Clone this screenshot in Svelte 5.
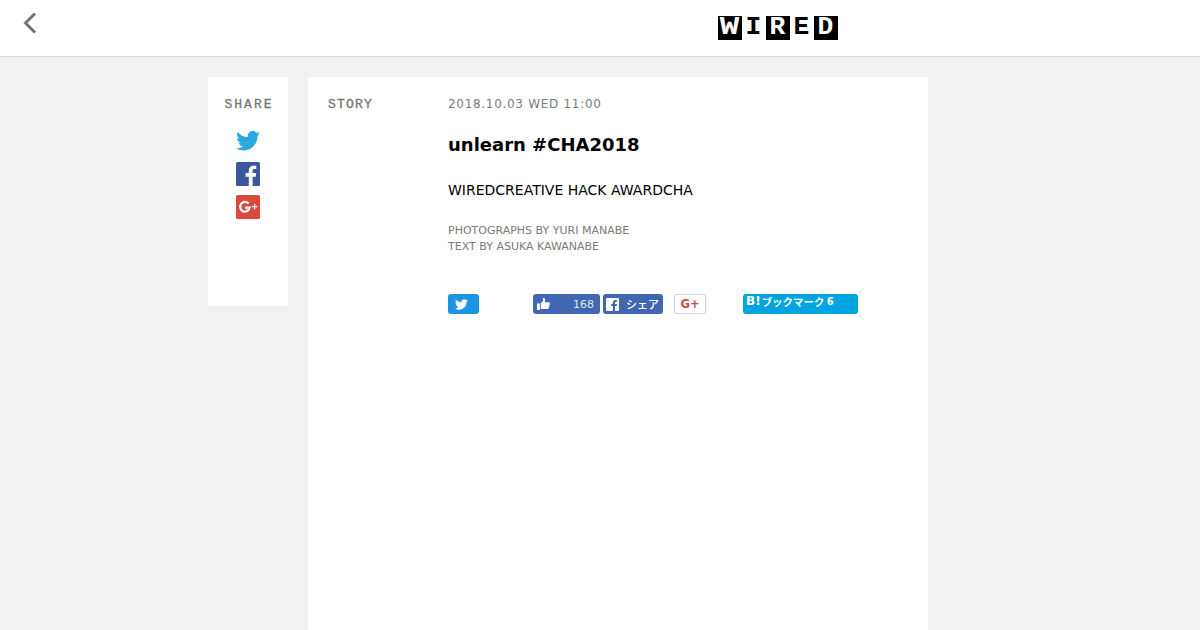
<script>
  const logo = ['W','I','R','E','D'];
</script>

<div class="page">
  <header class="top">
    <a class="back" href="#back" aria-label="back">
      <svg width="16" height="24" viewBox="0 0 16 24"><path d="M13 2.500 L3.500 12 L13 21.500" fill="none" stroke="#757575" stroke-width="3"/></svg>
    </a>
    <div class="logo">
      {#each logo as l, i}
        <span class="cell" class:inv={i % 2 === 1}><span class="glyph" class:wide={l === 'W'}>{l}</span></span>
      {/each}
    </div>
  </header>

  <main class="wrap">
    <aside class="share">
      <div class="label share-label">SHARE</div>
      <svg class="tw" width="24" height="20" viewBox="0 0 24 20"><path fill="#2ca7e0" d="M24 2.400c-.9.400-1.800.7-2.800.8 1-.6 1.800-1.600 2.200-2.700-1 .6-2 1-3.100 1.200C19.300.7 18 .1 16.600.1c-2.700 0-4.900 2.200-4.900 4.900 0 .4 0 .8.100 1.100C7.700 5.900 4.100 4 1.700.9c-.4.700-.7 1.600-.7 2.500 0 1.700.9 3.200 2.200 4.100-.8 0-1.600-.2-2.200-.6v.1c0 2.400 1.700 4.400 3.900 4.800-.4.100-.8.200-1.300.2-.3 0-.6 0-.9-.1.600 2 2.400 3.400 4.600 3.400-1.700 1.300-3.800 2.100-6.100 2.100-.4 0-.8 0-1.200-.1 2.200 1.400 4.800 2.200 7.500 2.200 9.100 0 14-7.500 14-14v-.6c1-.7 1.800-1.600 2.500-2.500z"/></svg>
      <svg class="sq" width="24" height="24" viewBox="0 0 24 24"><rect width="24" height="24" rx="1.500" fill="#3b5998"/><path fill="#fff" d="M16.600 24v-9.300h3.100l.5-3.600h-3.600V8.800c0-1 .3-1.800 1.800-1.800h1.900V3.800c-.3 0-1.500-.1-2.800-.1-2.800 0-4.700 1.700-4.700 4.800v2.600H9.600v3.600h3.200V24z"/></svg>
      <svg class="sq" width="24" height="24" viewBox="0 0 24 24"><rect width="24" height="24" rx="1.500" fill="#d94a3d"/><path fill="none" stroke="#fff" stroke-width="2.200" d="M12.600 8.600a4.800 4.800 0 1 0 1.100 4H9"/><path fill="#fff" d="M16 11h2v-2h1.300v2h2v1.300h-2v2H18v-2h-2z"/></svg>
    </aside>

    <article class="story">
      <div class="label story-label">STORY</div>
      <div class="body">
        <div class="date">2018.10.03 WED 11:00</div>
        <h1>unlearn #CHA2018</h1>
        <p class="sub">WIREDCREATIVE HACK AWARDCHA</p>
        <p class="credit">PHOTOGRAPHS BY YURI MANABE<br />TEXT BY ASUKA KAWANABE</p>

        <div class="buttons">
          <div class="btn tw-btn">
            <svg width="13" height="11" viewBox="0 0 24 20"><path fill="#fff" d="M24 2.400c-.9.400-1.800.7-2.800.8 1-.6 1.800-1.600 2.200-2.700-1 .6-2 1-3.100 1.200C19.300.7 18 .1 16.600.1c-2.700 0-4.900 2.200-4.900 4.900 0 .4 0 .8.100 1.100C7.700 5.900 4.100 4 1.700.9c-.4.700-.7 1.600-.7 2.500 0 1.700.9 3.200 2.200 4.100-.8 0-1.600-.2-2.200-.6v.1c0 2.400 1.700 4.400 3.900 4.800-.4.100-.8.200-1.300.2-.3 0-.6 0-.9-.1.600 2 2.400 3.400 4.600 3.400-1.700 1.300-3.800 2.100-6.100 2.100-.4 0-.8 0-1.200-.1 2.200 1.400 4.800 2.200 7.500 2.200 9.100 0 14-7.500 14-14v-.6c1-.7 1.800-1.600 2.500-2.500z"/></svg>
          </div>
          <div class="btn fb like">
            <svg width="13" height="12" viewBox="0 0 14 13"><path fill="#fff" d="M0 6h3v7H0zM4 6l2.500-3V0.500C6.500 0 7 0 7.500 0 9 .3 9 2 8.300 4.500H13c1 0 1 1 .7 1.500.3.500.2 1.200-.2 1.500.2.600 0 1.200-.4 1.500.1.600-.1 1.200-.5 1.400.2 1-.4 1.600-1.300 1.600H6.500L4 12z"/></svg>
            <span>168</span>
          </div>
          <div class="btn fb shr">
            <svg width="13" height="13" viewBox="0 0 14 14"><rect width="14" height="14" rx="1" fill="#fff"/><path fill="#4267b2" d="M9.700 14V8.600h1.800l.3-2.100H9.700V5.200c0-.6.200-1 1-1h1.100V2.300c-.2 0-.9-.1-1.600-.1-1.600 0-2.800 1-2.800 2.800v1.500H5.600v2.100h1.800V14z"/></svg>
            <span>シェア</span>
          </div>
          <div class="btn gp">G+</div>
          <div class="btn hb"><span class="b">B!</span><span class="hb-t">ブックマーク</span><span class="hb-n">6</span></div>
        </div>
      </div>
    </article>
  </main>
</div>

<style>
  :global(body) {
    margin: 0;
    background: #f1f1f1;
    overflow: hidden;
  }
  .page {
    height: 630px;
    overflow: hidden;
    font-family: "DejaVu Sans", sans-serif;
  }
  .top {
    height: 56px;
    background: #fff;
    border-bottom: 1px solid #dcdcdc;
    display: flex;
    align-items: flex-start;
    padding-left: 22px;
  }
  .back {
    display: block;
    height: 24px;
    margin-top: 11px;
    line-height: 0;
  }
  .logo {
    display: flex;
    margin: 16px 0 0 680px;
  }
  .cell {
    width: 24px;
    height: 24px;
    background: #000;
    color: #fff;
    font: 700 25px/24px "Liberation Mono", monospace;
    text-align: center;
  }
  .cell.inv {
    background: #fff;
    color: #000;
  }
  .glyph {
    display: inline-block;
    transform: scaleX(1.05);
  }
  .glyph.wide {
    transform: scaleX(1.3);
  }
  .wrap {
    display: flex;
    align-items: flex-start;
    gap: 20px;
    margin: 20px 0 0 208px;
  }
  .label {
    font: 13px/16px "Liberation Mono", monospace;
    color: #757575;
    -webkit-text-stroke: 0.3px #757575;
  }
  .share-label {
    letter-spacing: 2px;
    margin-right: -2px;
    padding-top: 1px;
  }
  .share {
    width: 80px;
    height: 229px;
    background: #fff;
    display: flex;
    flex-direction: column;
    align-items: center;
    padding-top: 19px;
    box-sizing: border-box;
  }
  .tw {
    margin-top: 18px;
  }
  .sq {
    margin-top: 11px;
  }
  .sq:last-child {
    margin-top: 9px;
  }
  .story {
    width: 620px;
    height: 560px;
    background: #fff;
    display: flex;
    padding: 19px 0 0 20px;
    box-sizing: border-box;
  }
  .story-label {
    width: 120px;
    flex: none;
    letter-spacing: 1.200px;
    padding-top: 1px;
  }
  .body {
    flex: 1;
  }
  .date {
    font-size: 12px;
    line-height: 16px;
    color: #7b7b7b;
    letter-spacing: 0.700px;
  }
  h1 {
    margin: 20px 0 0;
    font-size: 18px;
    line-height: 26px;
    font-weight: 700;
    color: #000;
  }
  .sub {
    margin: 22px 0 0;
    font-size: 14px;
    line-height: 20px;
    color: #000;
  }
  .credit {
    margin: 23px 0 0;
    font-size: 11px;
    line-height: 16px;
    color: #7b7b7b;
  }
  .buttons {
    display: flex;
    margin-top: 39px;
    height: 20px;
  }
  .btn {
    height: 20px;
    box-sizing: border-box;
    border-radius: 3px;
    display: flex;
    align-items: center;
    color: #fff;
    font-size: 11px;
  }
  .tw-btn {
    width: 31px;
    background: #1b95e0;
    justify-content: center;
    padding-right: 4px;
  }
  .fb {
    background: #4267b2;
  }
  .like {
    width: 67px;
    margin-left: 54px;
    padding: 0 6px 0 4px;
    justify-content: space-between;
  }
  .like span {
    color: #dfe6f4;
  }
  .shr {
    width: 60px;
    margin-left: 3px;
    padding: 0 4px 0 3px;
    justify-content: space-between;
  }
  .shr span {
    font-family: "Noto Sans CJK JP", sans-serif;
    font-size: 11px;
    font-weight: 500;
  }
  .gp {
    width: 32px;
    margin-left: 11px;
    background: #fff;
    border: 1px solid #d4d4d4;
    border-radius: 2px;
    color: #c25148;
    font-weight: 700;
    font-size: 11.500px;
    justify-content: center;
  }
  .hb {
    width: 115px;
    margin-left: 37px;
    background: #00a4de;
    font-family: "Noto Sans CJK JP", sans-serif;
    font-weight: 700;
    align-items: flex-start;
    padding-left: 3px;
    line-height: 15px;
  }
  .b {
    font-family: "DejaVu Sans", sans-serif;
    font-size: 12px;
  }
  .hb-t {
    font-size: 10.500px;
    margin-left: 1px;
  }
  .hb-n {
    font-family: "DejaVu Sans", sans-serif;
    font-size: 10px;
    margin-left: 2px;
  }
</style>
